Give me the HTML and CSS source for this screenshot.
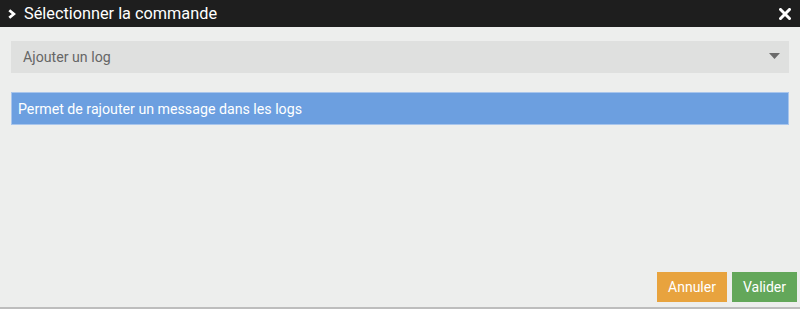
FILE: index.html
```html
<!DOCTYPE html>
<html lang="fr">
<head>
<meta charset="utf-8">
<link rel="stylesheet" href="styles.css">
</head>
<body>
<div class="dialog">
  <div class="titlebar">
    <svg class="chev" width="8" height="10" viewBox="0 0 8 10"><path d="M1.3 1.2 L5.8 5 L1.3 8.8" fill="none" stroke="#fff" stroke-width="2.8"/></svg>
    <span class="title">Sélectionner la commande</span>
    <svg class="close" width="12" height="12" viewBox="0 0 12 12"><path d="M1.5 1.5 L10.5 10.5 M10.5 1.5 L1.5 10.5" stroke="#fff" stroke-width="3" stroke-linecap="square"/></svg>
  </div>
  <div class="content">
    <div class="select">
      <span>Ajouter un log</span>
      <svg class="caret" width="11" height="6" viewBox="0 0 11 6"><path d="M0 0 H11 L5.5 6 Z" fill="#6b6b6b"/></svg>
    </div>
    <div class="info">Permet de rajouter un message dans les logs</div>
  </div>
  <div class="footer">
    <button class="btn cancel">Annuler</button>
    <button class="btn ok">Valider</button>
  </div>
</div>
</body>
</html>
```
FILE: styles.css
```css
html, body {
  margin: 0;
  padding: 0;
  background: #edeeed;
}
body {
  font-family: Roboto, "Liberation Sans", sans-serif;
}
.dialog {
  width: 800px;
  height: 309px;
  display: flex;
  flex-direction: column;
  box-sizing: border-box;
  border-bottom: 2px solid #bdbdbd;
}
.titlebar {
  height: 27px;
  background: #1e1e1e;
  display: flex;
  align-items: center;
  padding: 0 9px 0 8px;
  color: #fff;
}
.chev {
  margin-right: 8px;
}
.title {
  font-size: 16.3px;
  flex: 1;
  line-height: 27px;
}
.content {
  flex: 1;
  padding: 14px 11px 0 11px;
}
.select {
  height: 32px;
  background: #dfe0df;
  display: flex;
  align-items: center;
  padding: 0 9px 0 12px;
  font-size: 14.2px;
  color: #666;
}
.select span {
  flex: 1;
}
.caret {
  margin-bottom: 2px;
}
.info {
  margin-top: 19px;
  height: 33px;
  box-sizing: border-box;
  background: #6c9fe0;
  border: 1px solid #a8c5ec;
  color: #fff;
  font-size: 14.2px;
  display: flex;
  align-items: center;
  padding: 0 6px;
}
.footer {
  display: flex;
  justify-content: flex-end;
  gap: 5px;
  padding: 0 3px 5px 0;
}
.btn {
  border: none;
  height: 30px;
  font-family: Roboto, "Liberation Sans", sans-serif;
  font-size: 14px;
  color: #fff;
  padding: 0;
}
.cancel {
  width: 70px;
  background: #e8a33e;
}
.ok {
  width: 65px;
  background: #63a75a;
}
```
